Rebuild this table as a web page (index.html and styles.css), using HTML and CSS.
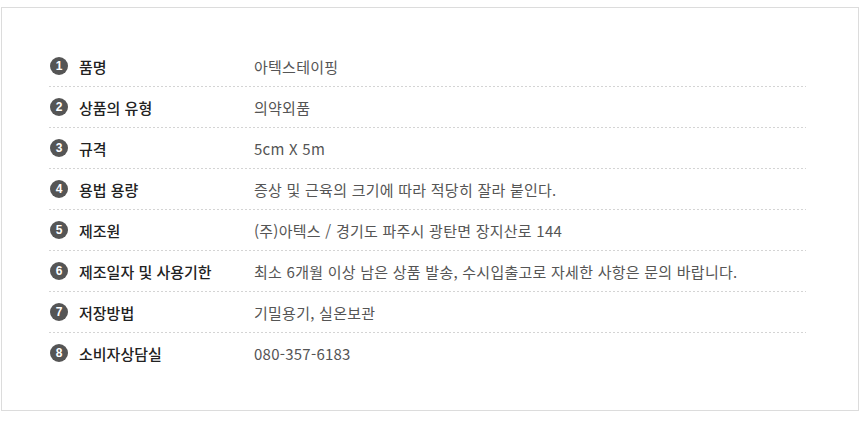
FILE: index.html
```html
<!DOCTYPE html>
<html lang="ko">
<head>
<meta charset="utf-8">
<link rel="stylesheet" href="styles.css">
</head>
<body>
<div class="box">
  <ul class="info">
    <li class="row"><span class="num">1</span><span class="label">품명</span><span class="value">아텍스테이핑</span></li>
    <li class="row"><span class="num">2</span><span class="label">상품의 유형</span><span class="value">의약외품</span></li>
    <li class="row"><span class="num">3</span><span class="label">규격</span><span class="value">5cm X 5m</span></li>
    <li class="row"><span class="num">4</span><span class="label">용법 용량</span><span class="value">증상 및 근육의 크기에 따라 적당히 잘라 붙인다.</span></li>
    <li class="row"><span class="num">5</span><span class="label">제조원</span><span class="value">(주)아텍스 / 경기도 파주시 광탄면 장지산로 144</span></li>
    <li class="row"><span class="num">6</span><span class="label">제조일자 및 사용기한</span><span class="value">최소 6개월 이상 남은 상품 발송, 수시입출고로 자세한 사항은 문의 바랍니다.</span></li>
    <li class="row"><span class="num">7</span><span class="label">저장방법</span><span class="value">기밀용기, 실온보관</span></li>
    <li class="row last"><span class="num">8</span><span class="label">소비자상담실</span><span class="value">080-357-6183</span></li>
  </ul>
</div>
</body>
</html>
```

FILE: styles.css
```css
html, body {
  margin: 0;
  padding: 0;
  background: #fff;
}
body {
  font-family: "Noto Sans CJK KR", "Noto Sans", sans-serif;
  font-size: 15px;
}
.box {
  margin: 7px 1px 0 1px;
  border: 1px solid #dcdcdc;
  padding: 38px 52px 0 47px;
  box-sizing: border-box;
  height: 404px;
}
.info {
  list-style: none;
  margin: 0;
  padding: 0;
}
.row {
  display: flex;
  align-items: center;
  height: 41px;
  box-sizing: border-box;
  padding-bottom: 1px;
  background-image: linear-gradient(to right, #d4d4d4 0 2px, transparent 2px 4px);
  background-size: 4px 1px;
  background-repeat: repeat-x;
  background-position: left bottom;
}
.row.last {
  background: none;
}
.num {
  width: 18px;
  height: 18px;
  margin-left: 1px;
  border-radius: 50%;
  background: #555;
  color: #fff;
  font-family: "Liberation Sans", Arial, sans-serif;
  font-weight: bold;
  font-size: 12px;
  line-height: 18px;
  text-align: center;
  flex: none;
}
.label {
  width: 175px;
  margin-left: 11px;
  color: #222;
  font-weight: 500;
  flex: none;
}
.value {
  color: #555;
  letter-spacing: 0.25px;
}
```
